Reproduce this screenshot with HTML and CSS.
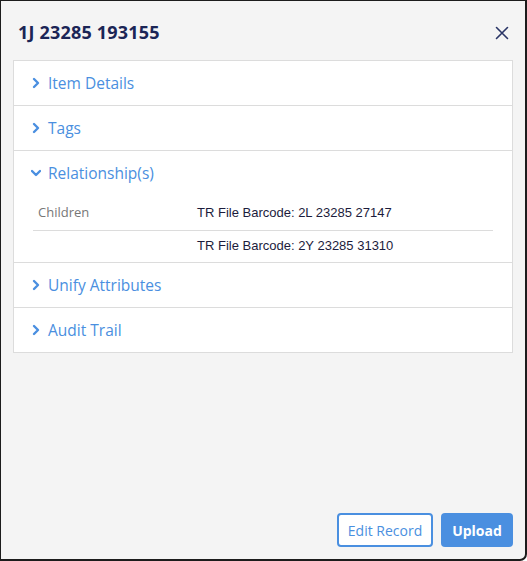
FILE: index.html
```html
<!DOCTYPE html>
<html>
<head>
<meta charset="utf-8">
<link rel="stylesheet" href="styles.css">
</head>
<body>
<div class="modal">
  <header class="modal-head">
    <h1 class="title">1J 23285 193155</h1>
    <button class="close" aria-label="Close">
      <svg width="14" height="14" viewBox="0 0 14 14"><path d="M1.5 1.5L12.5 12.5M12.5 1.5L1.5 12.5" stroke="#2a3566" stroke-width="1.6" fill="none" stroke-linecap="round"/></svg>
    </button>
  </header>
  <div class="panel">
    <div class="section">
      <div class="sec-head"><svg class="chev" width="10" height="14" viewBox="0 0 10 14"><path d="M3 3L7 7L3 11" stroke="#4a8fe0" stroke-width="2.4" fill="none" stroke-linecap="round" stroke-linejoin="round"/></svg><span>Item Details</span></div>
    </div>
    <div class="section">
      <div class="sec-head"><svg class="chev" width="10" height="14" viewBox="0 0 10 14"><path d="M3 3L7 7L3 11" stroke="#4a8fe0" stroke-width="2.4" fill="none" stroke-linecap="round" stroke-linejoin="round"/></svg><span>Tags</span></div>
    </div>
    <div class="section open">
      <div class="sec-head"><svg class="chev" width="10" height="14" viewBox="0 0 10 14"><path d="M1 5L5 9L9 5" stroke="#4a8fe0" stroke-width="2.4" fill="none" stroke-linecap="round" stroke-linejoin="round"/></svg><span>Relationship(s)</span></div>
      <div class="rel">
        <div class="rel-row"><div class="rel-label">Children</div><div class="rel-value">TR File Barcode: 2L 23285 27147</div></div>
        <div class="rel-row"><div class="rel-label"></div><div class="rel-value">TR File Barcode: 2Y 23285 31310</div></div>
      </div>
    </div>
    <div class="section">
      <div class="sec-head"><svg class="chev" width="10" height="14" viewBox="0 0 10 14"><path d="M3 3L7 7L3 11" stroke="#4a8fe0" stroke-width="2.4" fill="none" stroke-linecap="round" stroke-linejoin="round"/></svg><span>Unify Attributes</span></div>
    </div>
    <div class="section">
      <div class="sec-head"><svg class="chev" width="10" height="14" viewBox="0 0 10 14"><path d="M3 3L7 7L3 11" stroke="#4a8fe0" stroke-width="2.4" fill="none" stroke-linecap="round" stroke-linejoin="round"/></svg><span>Audit Trail</span></div>
    </div>
  </div>
  <div class="spacer"></div>
  <footer class="actions">
    <button class="btn btn-outline">Edit Record</button>
    <button class="btn btn-primary">Upload</button>
  </footer>
</div>
</body>
</html>
```
FILE: styles.css
```css
* { box-sizing: border-box; }
html, body { margin: 0; padding: 0; }
body { width: 527px; height: 561px; overflow: hidden; background: #ffffff; }
.modal {
  width: 527px;
  height: 561px;
  background: #f4f4f4;
  border: 2px solid #1c1c1c;
  border-top-width: 1px;
  border-left-width: 1px;
  border-radius: 0 0 7px 0;
  display: flex;
  flex-direction: column;
  padding: 0 12px 12px 12px;
  font-family: "Open Sans", "Noto Sans", sans-serif;
}
.modal-head {
  height: 59px;
  display: flex;
  align-items: center;
  justify-content: space-between;
  padding: 0 4px 0 5px;
}
.title {
  margin: 0;
  font-size: 18px;
  font-weight: 700;
  color: #1b2556;
  letter-spacing: 0.2px;
  position: relative;
  top: 1px;
}
.close {
  background: none;
  border: 0;
  padding: 0;
  width: 14px;
  height: 14px;
  display: flex;
  position: relative;
  top: 2px;
}
.panel {
  background: #ffffff;
  border: 1px solid #dcdcdc;
  display: flex;
  flex-direction: column;
}
.section { border-top: 1px solid #dcdcdc; }
.section:first-child { border-top: 0; }
.sec-head {
  height: 44px;
  display: flex;
  align-items: center;
  padding-left: 17px;
  color: #4a8fe0;
  font-size: 15.5px;
}
.chev { margin-right: 7px; flex: none; }
.rel { padding: 0 19px 0 19px; }
.rel-row {
  display: flex;
  align-items: center;
  border-top: 1px solid #dcdcdc;
}
.rel-row:first-child { border-top: 0; height: 35px; padding-bottom: 1px; }
.rel-row:last-child { height: 32px; padding-bottom: 3px; }
.rel-label {
  width: 164px;
  padding-left: 5px;
  font-size: 13px;
  color: #777777;
}
.rel-value {
  font-family: "Liberation Sans", Arial, sans-serif;
  font-size: 13px;
  color: #1c1c3c;
}
.spacer { flex: 1; }
.actions {
  display: flex;
  justify-content: flex-end;
  gap: 8px;
}
.btn {
  height: 34px;
  border-radius: 4px;
  font-family: "Open Sans", "Noto Sans", sans-serif;
  font-size: 14px;
  padding: 0;
  white-space: nowrap;
  cursor: pointer;
}
.btn-outline {
  background: #ffffff;
  border: 2px solid #4a8fe0;
  color: #4a8fe0;
  width: 96px;
}
.btn-primary {
  background: #4a8fe0;
  border: 0;
  color: #ffffff;
  font-weight: 700;
  width: 72px;
}
```
